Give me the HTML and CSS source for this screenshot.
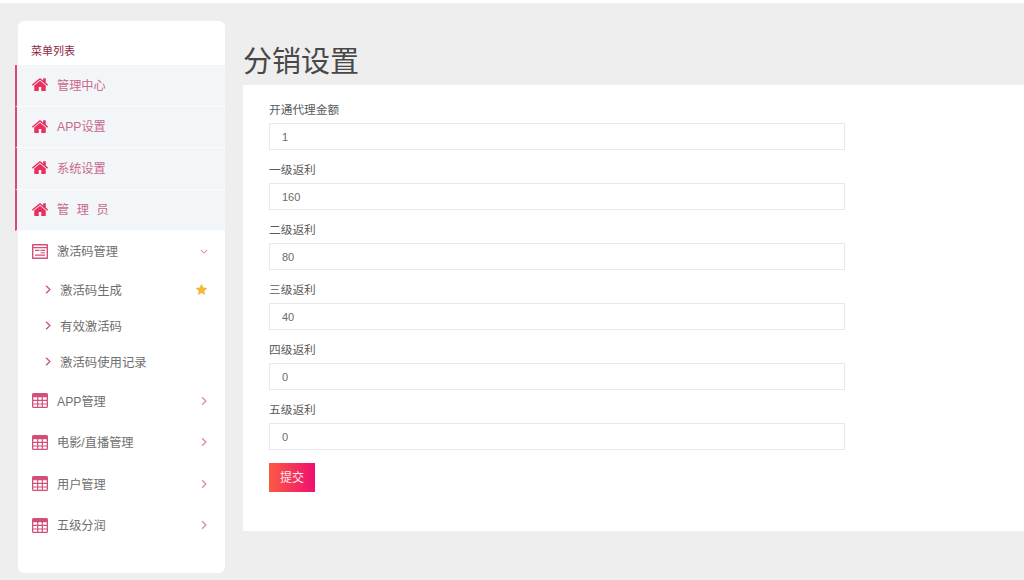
FILE: index.html
```html
<!DOCTYPE html>
<html lang="zh-CN">
<head>
    <meta charset="UTF-8">
    <meta name="viewport" content="width=device-width, initial-scale=1.0">
    <title>分销设置</title>
    <link rel="stylesheet" href="styles.css">
</head>
<body>
    <svg class="icon-defs" width="0" height="0">
        <symbol id="i-home" viewBox="96 240 1600 1300">
            <path d="M1472 992v480q0 26-19 45t-45 19h-384v-384h-256v384h-384q-26 0-45-19t-19-45v-480q0-1 .5-3t.5-3l575-474 575 474q1 2 1 6zm223-69l-62 74q-8 9-21 11h-3q-13 0-21-7l-692-577-692 577q-12 8-24 7-13-2-21-11l-62-74q-8-10-7-23.5t11-21.5l719-599q32-26 76-26t76 26l244 204v-195q0-14 9-23t23-9h192q14 0 23 9t9 23v408l219 182q10 8 11 21.5t-7 23.5z"/>
        </symbol>
        <symbol id="i-table" viewBox="0 0 16 15">
            <path fill-rule="evenodd" d="M1.500 0h13A1.500 1.500 0 0 1 16 1.500v12a1.500 1.500 0 0 1-1.500 1.500h-13A1.500 1.500 0 0 1 0 13.500v-12A1.500 1.500 0 0 1 1.500 0zM1.300 4.300v2.500h3.800V4.300zm5 0v2.500h3.400V4.300zm4.600 0v2.500h3.800V4.300zM1.300 8v2.400h3.800V8zm5 0v2.400h3.400V8zm4.600 0v2.400h3.800V8zM1.300 11.600v2.100h3.800v-2.100zm5 0v2.100h3.400v-2.100zm4.600 0v2.100h3.800v-2.100z"/>
        </symbol>
        <symbol id="i-code" viewBox="0 0 16 15">
            <path fill-rule="evenodd" d="M.800 0h14.400a.800.800 0 0 1 .800.800v13.400a.800.800 0 0 1-.800.800H.800a.800.800 0 0 1-.800-.800V.800A.800.800 0 0 1 .800 0zM1.400 4.200v9.400h13.200V4.200zM1.400 1.400v1.600h13.200V1.400z"/>
            <path d="M3 5.800h4.500v1.100H3zM8.500 5.800H13v1.100H8.500zM8.500 8.200H13v1.100H8.500zM3 10.600h10v1.100H3z"/>
        </symbol>
        <symbol id="i-right" viewBox="0 0 8 12">
            <path d="M1.500 1l5 5-5 5" fill="none" stroke="currentColor" stroke-width="1.900"/>
        </symbol>
        <symbol id="i-down" viewBox="0 0 10 6">
            <path d="M1 1l4 4 4-4" fill="none" stroke="currentColor" stroke-width="1.300"/>
        </symbol>
        <symbol id="i-star" viewBox="0 0 24 24">
            <path d="M12 1.500l3.300 6.900 7.500 1-5.500 5.200 1.400 7.500-6.700-3.700-6.700 3.700 1.400-7.500-5.500-5.200 7.500-1z"/>
        </symbol>
    </svg>

    <div class="page">
        <aside class="sidebar">
            <div class="menu-title">菜单列表</div>

            <a class="menu-item active"><svg class="icon"><use href="#i-home"/></svg><span>管理中心</span></a>
            <a class="menu-item active"><svg class="icon"><use href="#i-home"/></svg><span>APP设置</span></a>
            <a class="menu-item active"><svg class="icon"><use href="#i-home"/></svg><span>系统设置</span></a>
            <a class="menu-item active"><svg class="icon"><use href="#i-home"/></svg><span class="wide">管理员</span></a>

            <a class="menu-item"><svg class="icon"><use href="#i-code"/></svg><span>激活码管理</span><svg class="caret down"><use href="#i-down"/></svg></a>
            <a class="sub-item"><svg class="sub-arrow"><use href="#i-right"/></svg><span>激活码生成</span><svg class="star"><use href="#i-star"/></svg></a>
            <a class="sub-item"><svg class="sub-arrow"><use href="#i-right"/></svg><span>有效激活码</span></a>
            <a class="sub-item"><svg class="sub-arrow"><use href="#i-right"/></svg><span>激活码使用记录</span></a>

            <a class="menu-item"><svg class="icon"><use href="#i-table"/></svg><span>APP管理</span><svg class="caret"><use href="#i-right"/></svg></a>
            <a class="menu-item"><svg class="icon"><use href="#i-table"/></svg><span>电影/直播管理</span><svg class="caret"><use href="#i-right"/></svg></a>
            <a class="menu-item"><svg class="icon"><use href="#i-table"/></svg><span>用户管理</span><svg class="caret"><use href="#i-right"/></svg></a>
            <a class="menu-item"><svg class="icon"><use href="#i-table"/></svg><span>五级分润</span><svg class="caret"><use href="#i-right"/></svg></a>
        </aside>

        <main class="main">
            <h1>分销设置</h1>
            <form class="panel">
                <div class="field">
                    <label>开通代理金额</label>
                    <input type="text" value="1">
                </div>
                <div class="field">
                    <label>一级返利</label>
                    <input type="text" value="160">
                </div>
                <div class="field">
                    <label>二级返利</label>
                    <input type="text" value="80">
                </div>
                <div class="field">
                    <label>三级返利</label>
                    <input type="text" value="40">
                </div>
                <div class="field">
                    <label>四级返利</label>
                    <input type="text" value="0">
                </div>
                <div class="field">
                    <label>五级返利</label>
                    <input type="text" value="0">
                </div>
                <button type="button">提交</button>
            </form>
        </main>
    </div>
</body>
</html>
```

FILE: styles.css
```css
* {
    box-sizing: border-box;
}
body {
    margin: 0;
    height: 580px;
    overflow: hidden;
    border-top: 3px solid #fff;
    background-color: #eee;
    color: #555;
    font-family: "Liberation Sans", "Noto Sans CJK SC", sans-serif;
    font-size: 12px;
}
.icon-defs {
    position: absolute;
}
.page {
    display: flex;
    align-items: flex-start;
    padding: 18px 0 0 18px;
}
.sidebar {
    flex: none;
    width: 207px;
    height: 552px;
    background-color: #fff;
    border-radius: 6px;
}
.menu-title {
    height: 44px;
    padding: 21px 0 0 13px;
    line-height: 18px;
    font-size: 11px;
    color: #8e1f43;
}
.menu-item {
    display: flex;
    align-items: center;
    height: 41.5px;
    padding-left: 14px;
    padding-bottom: 1px;
    color: #6f6f6f;
    font-size: 12.2px;
}
.menu-item span {
    margin-left: 9px;
}
.menu-item.active {
    margin-left: -3px;
    padding-left: 15px;
    border-left: 2px solid #d9487a;
    border-bottom: 1px solid #f9fbfc;
    background-color: #f2f6f9;
    color: #c9688c;
}
.wide {
    letter-spacing: 7.600px;
}
.icon {
    flex: none;
    width: 16px;
    height: 15px;
    fill: #d24f78;
}
.active .icon {
    fill: #e8305f;
}
.caret {
    width: 6px;
    height: 10px;
    margin-left: auto;
    margin-right: 18px;
    color: #dc8fad;
}
.caret.down {
    width: 8px;
    height: 5px;
    margin-right: 17px;
}
.sub-item {
    display: flex;
    align-items: center;
    height: 36px;
    padding-left: 27px;
    padding-bottom: 2px;
    color: #6f6f6f;
    font-size: 12.4px;
}
.sub-item span {
    margin-left: 9px;
}
.sub-arrow {
    flex: none;
    width: 6px;
    height: 11px;
    color: #cc5a84;
}
.star {
    width: 13px;
    height: 13px;
    margin-left: auto;
    margin-right: 17px;
    fill: #f3b73f;
}
.main {
    flex: 1;
    margin-left: 18px;
}
h1 {
    height: 64px;
    margin: 0;
    padding-top: 21px;
    line-height: 40px;
    font-size: 29px;
    font-weight: 400;
    color: #484848;
}
.panel {
    height: 446px;
    padding: 15px 0 0 26px;
    background-color: #fff;
}
.field {
    height: 60px;
}
.field label {
    display: block;
    height: 23px;
    line-height: 20px;
    font-size: 11.700px;
    color: #5a5a5a;
}
.field input {
    display: block;
    width: 576px;
    height: 27px;
    padding: 0 12px;
    border: 1px solid #e9e9e9;
    background-color: #fff;
    color: #6a6a6a;
    font-family: inherit;
    font-size: 11px;
    outline: none;
}
button {
    display: block;
    width: 46px;
    height: 29px;
    margin-top: 3px;
    padding: 0 0 2px;
    border: none;
    background: linear-gradient(90deg, #fb5a42, #f00f70);
    color: #fdeaf0;
    font-family: inherit;
    font-size: 12px;
}
```
